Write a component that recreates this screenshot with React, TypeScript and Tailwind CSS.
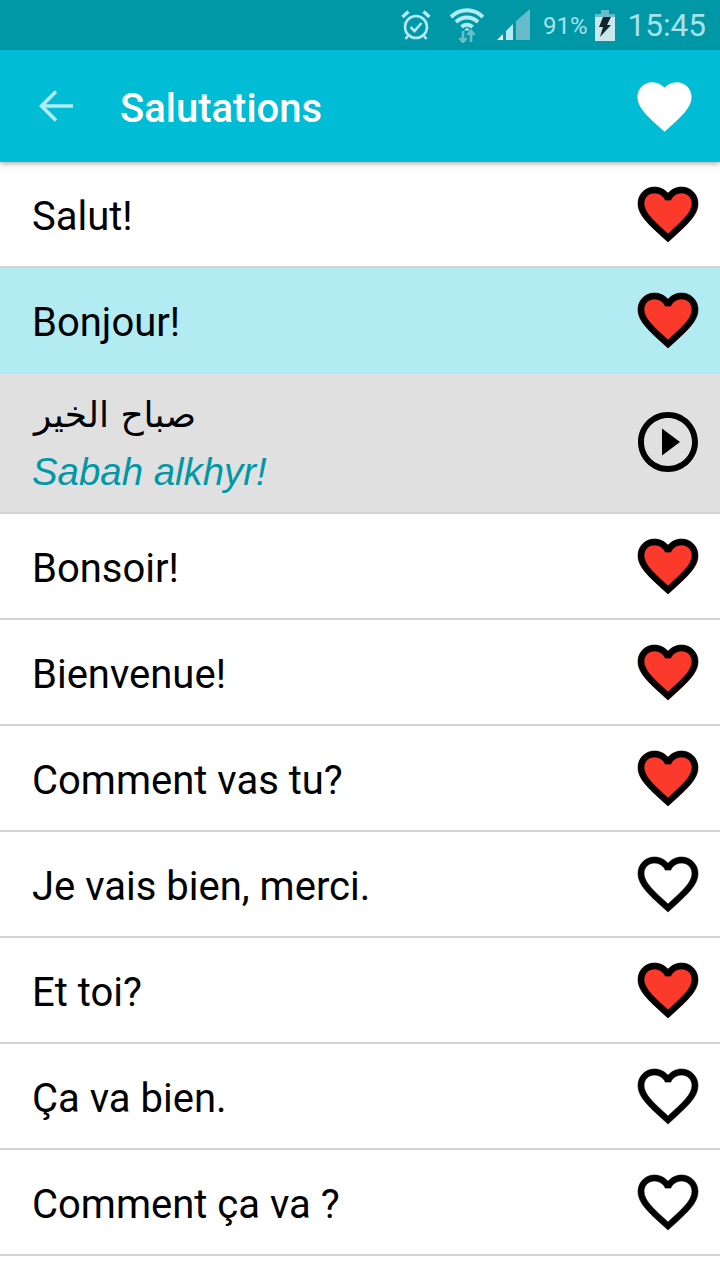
import React from 'react';

const HEART = "M12 21.35l-1.45-1.32C5.4 15.36 2 12.28 2 8.5 2 5.42 4.42 3 7.5 3c1.74 0 3.41.81 4.5 2.09C13.09 3.81 14.76 3 16.5 3 19.58 3 22 5.42 22 8.5c0 3.78-3.4 6.86-8.55 11.54L12 21.35z";
const HEART_BORDER = "M16.5 3c-1.74 0-3.41.81-4.5 2.09C10.91 3.81 9.24 3 7.5 3 4.42 3 2 5.42 2 8.5c0 3.78 3.4 6.86 8.55 11.54L12 21.35l1.45-1.32C18.6 15.36 22 12.28 22 8.5 22 5.42 19.58 3 16.5 3zm-4.4 15.55l-.1.1-.1-.1C7.14 14.24 4 11.39 4 8.5 4 6.5 5.5 5 7.5 5c1.54 0 3.04.99 3.57 2.36h1.87C13.46 5.99 14.96 5 16.5 5c2 0 3.5 1.5 3.5 3.5 0 2.89-3.14 5.74-7.9 10.05z";

function Heart({ on }: { on: boolean }) {
  return (
    <svg viewBox="0 0 24 24" className="w-[72px] h-[72px] shrink-0">
      {on && <path d={HEART} fill="#fb3a2c" />}
      <path d={HEART_BORDER} fill="#000" stroke="#000" strokeWidth="0.2" />
    </svg>
  );
}

function Row({ text, on = true, selected = false }: { text: string; on?: boolean; selected?: boolean }) {
  return (
    <div className={`h-[106px] flex items-center justify-between pl-[32px] pr-[16px] border-b-2 ${selected ? 'bg-[#b2ebf2] border-[#b2ebf2]' : 'bg-white border-[#d4d4d4]'}`}>
      <span className="mt-[6px] text-[40px] leading-none text-black">{text}</span>
      <Heart on={on} />
    </div>
  );
}

export default function App() {
  return (
    <div className="w-[720px] h-[1280px] overflow-hidden bg-white font-['Roboto',sans-serif]">
      {/* status bar */}
      <div className="h-[50px] bg-[#0097a7] flex items-center justify-end text-[#a8e2e9] pr-[14px]">
        <svg viewBox="0 0 30 32" className="w-[30px] h-[32px] mr-[19px]" fill="none" stroke="#b2ebf2">
          <circle cx="15" cy="18" r="11" strokeWidth="2.6" />
          <path d="M9.5 18l4 4 7-8" strokeWidth="2.6" />
          <path d="M1.5 8L7.5 2.5 M28.5 8L22.5 2.5" strokeWidth="3.6" />
          <path d="M7 27l-2.5 3 M23 27l2.5 3" strokeWidth="2.6" />
        </svg>
        <svg viewBox="0 0 34 35" className="w-[34px] h-[35px] mr-[13px]" fill="none">
          <path d="M1 9C10 0 24 0 33 9" stroke="#b2ebf2" strokeWidth="4" />
          <path d="M6 14C12.500 8 21.500 8 28 14" stroke="#b2ebf2" strokeWidth="4" />
          <path d="M11.500 19C14.500 16 19.500 16 22.500 19" stroke="#b2ebf2" strokeWidth="4" />
          <path d="M14 22.500L17 19.500 20 22.500z" fill="#b2ebf2" />
          <path d="M13 23v11 M9.500 30l3.500 4 3.500-4 M21 34v-11 M17.500 27l3.500-4 3.500 4" stroke="#6bbfca" strokeWidth="2.600" />
        </svg>
        <svg viewBox="0 0 33 32" className="w-[33px] h-[32px] mr-[13px]">
          <path d="M0 31L6 25V31z" fill="#e0f7fa" />
          <path d="M9 31V22L16 15V31z" fill="#b2ebf2" />
          <path d="M19 31V12L33 0V31z" fill="#66bcc8" />
        </svg>
        <span className="text-[24px] leading-none mr-[7px] mt-[2px]">91%</span>
        <svg viewBox="0 0 20 31" className="w-[20px] h-[31px] mr-[13px]">
          <path d="M6 0h8v4H6z" fill="#66bcc8" />
          <path d="M0 4h20v3H0z" fill="#66bcc8" />
          <path d="M0 7h20v24H0z" fill="#c9e8ec" />
          <path d="M8 7h8l-4 8h4L5 27l3-10H4z" fill="#12262a" />
        </svg>
        <span className="text-[31.5px] leading-none mt-[2px]">15:45</span>
      </div>

      {/* toolbar */}
      <div className="relative z-10 h-[112px] bg-[#00bcd4] flex items-center shadow-[0_2px_5px_rgba(0,0,0,0.3)]">
        <svg viewBox="0 0 34 32" className="w-[34px] h-[32px] ml-[39px] mr-[47px]" fill="none" stroke="#b2ebf2" strokeWidth="3.600">
          <path d="M34 16H3 M17 1.500L2.500 16 17 30.500" />
        </svg>
        <span className="mt-[6px] text-[40px] leading-none font-medium text-white">Salutations</span>
        <svg viewBox="0 0 24 24" className="w-[65px] h-[65px] ml-auto mr-[23px]">
          <path d={HEART} fill="#fff" />
        </svg>
      </div>

      {/* list */}
      <Row text="Salut!" />
      <Row text="Bonjour!" selected />
      <div className="h-[140px] flex items-center justify-between pl-[32px] pr-[16px] bg-[#e0e0e0] border-b-2 border-[#d4d4d4]">
        <div className="flex flex-col">
          <span dir="rtl" className="self-start ml-[2px] text-[36px] leading-[56px] text-black font-['DejaVu_Sans',sans-serif]">صباح الخير</span>
          <span className="mt-[1px] text-[38.4px] leading-[56px] italic text-[#0097a7] font-['Liberation_Sans',sans-serif]">Sabah alkhyr!</span>
        </div>
        <svg viewBox="0 0 24 24" className="w-[72px] h-[72px] shrink-0 mb-[2px]">
          <path d="M10 16.500l6-4.500-6-4.500v9z" fill="#000" />
          <path d="M12 2C6.480 2 2 6.480 2 12s4.480 10 10 10 10-4.480 10-10S17.520 2 12 2zm0 18c-4.410 0-8-3.590-8-8s3.590-8 8-8 8 3.590 8 8-3.590 8-8 8z" fill="#000" />
        </svg>
      </div>
      <Row text="Bonsoir!" />
      <Row text="Bienvenue!" />
      <Row text="Comment vas tu?" />
      <Row text="Je vais bien, merci." on={false} />
      <Row text="Et toi?" />
      <Row text="Ça va bien." on={false} />
      <Row text="Comment ça va ?" on={false} />
    </div>
  );
}
